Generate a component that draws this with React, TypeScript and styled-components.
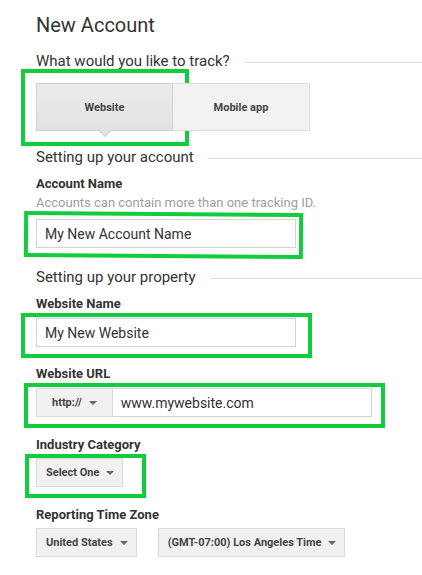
import styled, { createGlobalStyle, css } from 'styled-components';

const GREEN = '#13cb3f';

const GlobalStyle = createGlobalStyle`
  html, body {
    margin: 0;
    padding: 0;
    background: #fff;
  }
  body {
    font-family: Roboto, "Liberation Sans", Arial, sans-serif;
    color: #333;
  }
`;

const Page = styled.div`
  display: flex;
  flex-direction: column;
  align-items: flex-start;
  padding: 13px 0 20px 36px;
  width: 422px;
  box-sizing: border-box;
`;

const Title = styled.h1`
  margin: 0;
  font-size: 20px;
  line-height: 24px;
  font-weight: 400;
  color: #333;
`;

const SectionHeading = styled.div<{ $top: number }>`
  display: flex;
  align-items: center;
  gap: 14px;
  align-self: stretch;
  margin-top: ${(p) => p.$top}px;
  font-size: 15px;
  line-height: 20px;
  color: #333;

  &::after {
    content: '';
    flex: 1;
    height: 1px;
    background: #dedede;
    margin-top: 2px;
  }
`;

const Label = styled.div<{ $top: number }>`
  margin-top: ${(p) => p.$top}px;
  font-size: 13px;
  line-height: 16px;
  font-weight: 700;
  color: #333;
`;

const Hint = styled.div`
  margin-top: 3px;
  font-size: 13px;
  line-height: 16px;
  color: #9e9e9e;
`;

type Box = { t: number; r: number; b: number; l: number; tilt?: number };

const Highlight = styled.div<{ $box: Box; $top?: number }>`
  position: relative;
  display: flex;
  margin-top: ${(p) => p.$top ?? 0}px;

  &::after {
    content: '';
    position: absolute;
    top: -${(p) => p.$box.t}px;
    right: -${(p) => p.$box.r}px;
    bottom: -${(p) => p.$box.b}px;
    left: -${(p) => p.$box.l}px;
    border: 4px solid ${GREEN};
    pointer-events: none;
    ${(p) =>
      p.$box.tilt &&
      css`
        transform: rotate(${p.$box.tilt}deg);
      `}
  }
`;

const Tabs = styled.div`
  display: flex;
  margin-top: 12px;
`;

const Tab = styled.div<{ $active?: boolean }>`
  position: relative;
  display: flex;
  align-items: center;
  justify-content: center;
  width: 137px;
  height: 48px;
  box-sizing: border-box;
  font-size: 11px;
  font-weight: 700;
  color: #444;
  border: 1px solid ${(p) => (p.$active ? '#d2d2d2' : '#dcdcdc')};
  background: ${(p) =>
    p.$active ? 'linear-gradient(#ececec, #e2e2e2)' : '#f2f2f2'};
  ${(p) =>
    !p.$active &&
    css`
      border-left: none;
    `}

  ${(p) =>
    p.$active &&
    css`
      &::before {
        content: '';
        position: absolute;
        left: 50%;
        bottom: -5px;
        width: 9px;
        height: 9px;
        margin-left: -5px;
        background: #e3e3e3;
        border-right: 1px solid #d2d2d2;
        border-bottom: 1px solid #d2d2d2;
        transform: rotate(45deg);
      }
    `}
`;

const TextInput = styled.div<{ $width: number }>`
  display: flex;
  align-items: center;
  width: ${(p) => p.$width}px;
  height: 29px;
  box-sizing: border-box;
  padding: 0 8px;
  border: 1px solid #d3d3d3;
  background: #fff;
  font-size: 14px;
  color: #333;
`;

const UrlRow = styled.div`
  display: flex;
`;

const DropButton = styled.div<{ $pad?: number }>`
  display: flex;
  align-items: center;
  gap: 7px;
  height: 29px;
  box-sizing: border-box;
  padding: 0 ${(p) => p.$pad ?? 8}px 0 ${(p) => p.$pad ?? 9}px;
  border: 1px solid #dadada;
  background: #f1f1f1;
  font-size: 11px;
  font-weight: 700;
  color: #444;
  white-space: nowrap;
`;

const UrlInput = styled(TextInput)`
  border-left: none;
`;

const Caret = styled.span`
  width: 0;
  height: 0;
  border-left: 4px solid transparent;
  border-right: 4px solid transparent;
  border-top: 4px solid #666;
`;

const ButtonRow = styled.div`
  display: flex;
  gap: 21px;
  margin-top: 5px;
`;

const App = () => (
  <>
    <GlobalStyle />
    <Page>
      <Title>New Account</Title>
      <SectionHeading $top={14}>What would you like to track?</SectionHeading>
      <Tabs>
        <Highlight $box={{ t: 14, r: 16, b: 15, l: 15 }}>
          <Tab $active>Website</Tab>
        </Highlight>
        <Tab>Mobile app</Tab>
      </Tabs>

      <SectionHeading $top={16}>Setting up your account</SectionHeading>
      <Label $top={9}>Account Name</Label>
      <Hint>Accounts can contain more than one tracking ID.</Hint>
      <Highlight $top={8} $box={{ t: 7, r: 7, b: 10, l: 12, tilt: 0.4 }}>
        <TextInput $width={260}>My New Account Name</TextInput>
      </Highlight>

      <SectionHeading $top={19}>Setting up your property</SectionHeading>
      <Label $top={9}>Website Name</Label>
      <Highlight $top={6} $box={{ t: 5, r: 16, b: 11, l: 15 }}>
        <TextInput $width={260}>My New Website</TextInput>
      </Highlight>

      <Label $top={19}>Website URL</Label>
      <Highlight $top={6} $box={{ t: 5, r: 13, b: 11, l: 12 }}>
        <UrlRow>
          <DropButton $pad={15}>
            http://
            <Caret />
          </DropButton>
          <UrlInput $width={259}>www.mywebsite.com</UrlInput>
        </UrlRow>
      </Highlight>

      <Label $top={20}>Industry Category</Label>
      <Highlight $top={5} $box={{ t: 4, r: 23, b: 11, l: 11 }}>
        <DropButton>
          Select One
          <Caret />
        </DropButton>
      </Highlight>

      <Label $top={20}>Reporting Time Zone</Label>
      <ButtonRow>
        <DropButton>
          United States
          <Caret />
        </DropButton>
        <DropButton>
          (GMT-07:00) Los Angeles Time
          <Caret />
        </DropButton>
      </ButtonRow>
    </Page>
  </>
);

export default App;
